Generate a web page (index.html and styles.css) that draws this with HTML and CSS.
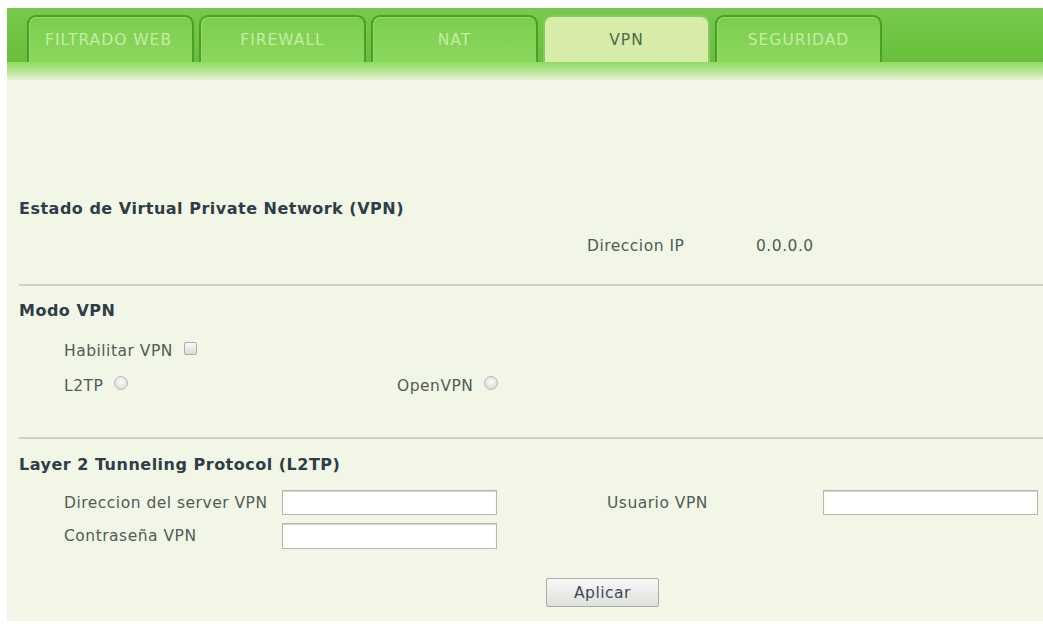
FILE: index.html
```html
<!DOCTYPE html>
<html lang="es">
<head>
<meta charset="utf-8">
<title>VPN</title>
<link rel="stylesheet" href="styles.css">
</head>
<body>
<div class="page">
  <div class="tabbar">
    <div class="tabs">
      <div class="tab">FILTRADO WEB</div>
      <div class="tab">FIREWALL</div>
      <div class="tab">NAT</div>
      <div class="tab active">VPN</div>
      <div class="tab">SEGURIDAD</div>
    </div>
    <div class="tabfade"></div>
  </div>
  <div class="content">
    <section class="sec sec-estado">
      <h2 class="title">Estado de Virtual Private Network (VPN)</h2>
      <div class="iprow">
        <span class="lbl">Direccion IP</span>
        <span class="val">0.0.0.0</span>
      </div>
    </section>
    <hr class="sep">
    <section class="sec sec-modo">
      <h2 class="title">Modo VPN</h2>
      <div class="modo">
        <div class="line"><span class="lbl">Habilitar VPN</span><span class="check"></span></div>
        <div class="line radios">
          <div class="opt opt-l2tp"><span class="lbl">L2TP</span><span class="radio"></span></div>
          <div class="opt"><span class="lbl">OpenVPN</span><span class="radio"></span></div>
        </div>
      </div>
    </section>
    <hr class="sep sep2">
    <section class="sec sec-l2tp">
      <h2 class="title">Layer 2 Tunneling Protocol (L2TP)</h2>
      <div class="form">
        <span class="lbl">Direccion del server VPN</span>
        <span class="input"></span>
        <span class="gap"></span>
        <span class="lbl">Usuario VPN</span>
        <span class="input"></span>
        <span class="lbl">Contraseña VPN</span>
        <span class="input tall"></span>
      </div>
      <div class="actions"><button class="btn">Aplicar</button></div>
    </section>
  </div>
</div>
</body>
</html>
```
FILE: styles.css
```css
html, body {
  margin: 0;
  padding: 0;
  background: #ffffff;
}
body {
  font-family: "DejaVu Sans", Verdana, sans-serif;
  font-size: 15.5px;
  letter-spacing: 0.5px;
  color: #525c57;
}
.page {
  padding: 8px 0 0 7px;
  height: 621px;
  box-sizing: border-box;
}
.tabbar {
  background: linear-gradient(#76c94c, #6cc23f 60%, #63b939);
  padding: 7px 0 0 20px;
}
.tabs {
  display: flex;
  gap: 5px;
  height: 47px;
}
.tab {
  width: 167px;
  box-sizing: border-box;
  border: 2px solid #4b9f28;
  border-bottom: none;
  border-radius: 9px 9px 0 0;
  background: linear-gradient(#7acd4f, #8cd85e);
  box-shadow: inset 1px 1px 0 #95dc6c;
  color: #c6eca6;
  font-size: 15.5px;
  letter-spacing: 1px;
  display: flex;
  align-items: center;
  justify-content: center;
}
.tab:first-child { justify-content: flex-start; padding-left: 16px; }
.tab.active {
  background: #d6eca8;
  box-shadow: none;
  color: #4d6847;
  border-color: #86c865;
}
.tabfade {
  height: 18px;
  margin-left: -20px;
  background: linear-gradient(#92d964, #b4e58f 50%, #e6f4d6);
}
.content {
  background: #f1f6e6;
  height: 541px;
  padding: 0 0 0 12px;
}
.title {
  margin: 0;
  font-size: 16px;
  font-weight: bold;
  color: #2f3d48;
  line-height: 18px;
}
.lbl, .val { line-height: 18px; }
.sec-estado { padding-top: 120px; }
.iprow {
  display: flex;
  margin-top: 19px;
  padding-left: 568px;
}
.iprow .lbl { width: 169px; }
.sep {
  border: none;
  border-top: 2px solid #cdd1c6;
  margin: 29px 0 0 0;
}
.sec-modo { padding-top: 16px; }
.modo { padding-left: 45px; }
.line {
  display: flex;
  align-items: center;
}
.modo .line:first-child { margin-top: 22px; }
.radios { margin-top: 17px; }
.opt { display: flex; align-items: center; }
.opt-l2tp { width: 333px; }
.check {
  width: 13px;
  height: 13px;
  margin-left: 11px;
  margin-top: -6px;
  border: 1px solid #a9aea8;
  border-radius: 2px;
  background: linear-gradient(#fafafa, #d9dcd8);
  box-sizing: border-box;
}
.radio {
  width: 14px;
  height: 14px;
  margin-left: 11px;
  margin-top: -6px;
  border: 1px solid #b5bab3;
  border-radius: 50%;
  background: radial-gradient(circle at 50% 40%, #fbfbfb, #d3d6d2);
  box-sizing: border-box;
}
.sep2 { margin-top: 42px; }
.sec-l2tp { padding-top: 17px; }
.form {
  display: grid;
  grid-template-columns: 218px 215px 110px 216px 215px;
  margin-top: 16px;
  padding-left: 45px;
  row-gap: 8px;
  align-items: center;
}
.form .gap { display: block; }
.input {
  display: block;
  height: 25px;
  background: #ffffff;
  border: 1px solid #b4b8b1;
  box-shadow: inset 0 1px 1px #d0d4cd;
  box-sizing: border-box;
}
.input.tall { height: 26px; }
.actions {
  display: flex;
  padding-left: 527px;
  margin-top: 29px;
}
.btn {
  width: 113px;
  height: 29px;
  font-family: "DejaVu Sans", Verdana, sans-serif;
  font-size: 15.5px;
  letter-spacing: 0.5px;
  color: #3e4a52;
  background: linear-gradient(#f7f7f7, #dfe1de);
  border: 1px solid #a9ada7;
  border-radius: 2px;
  padding: 0;
}
```
